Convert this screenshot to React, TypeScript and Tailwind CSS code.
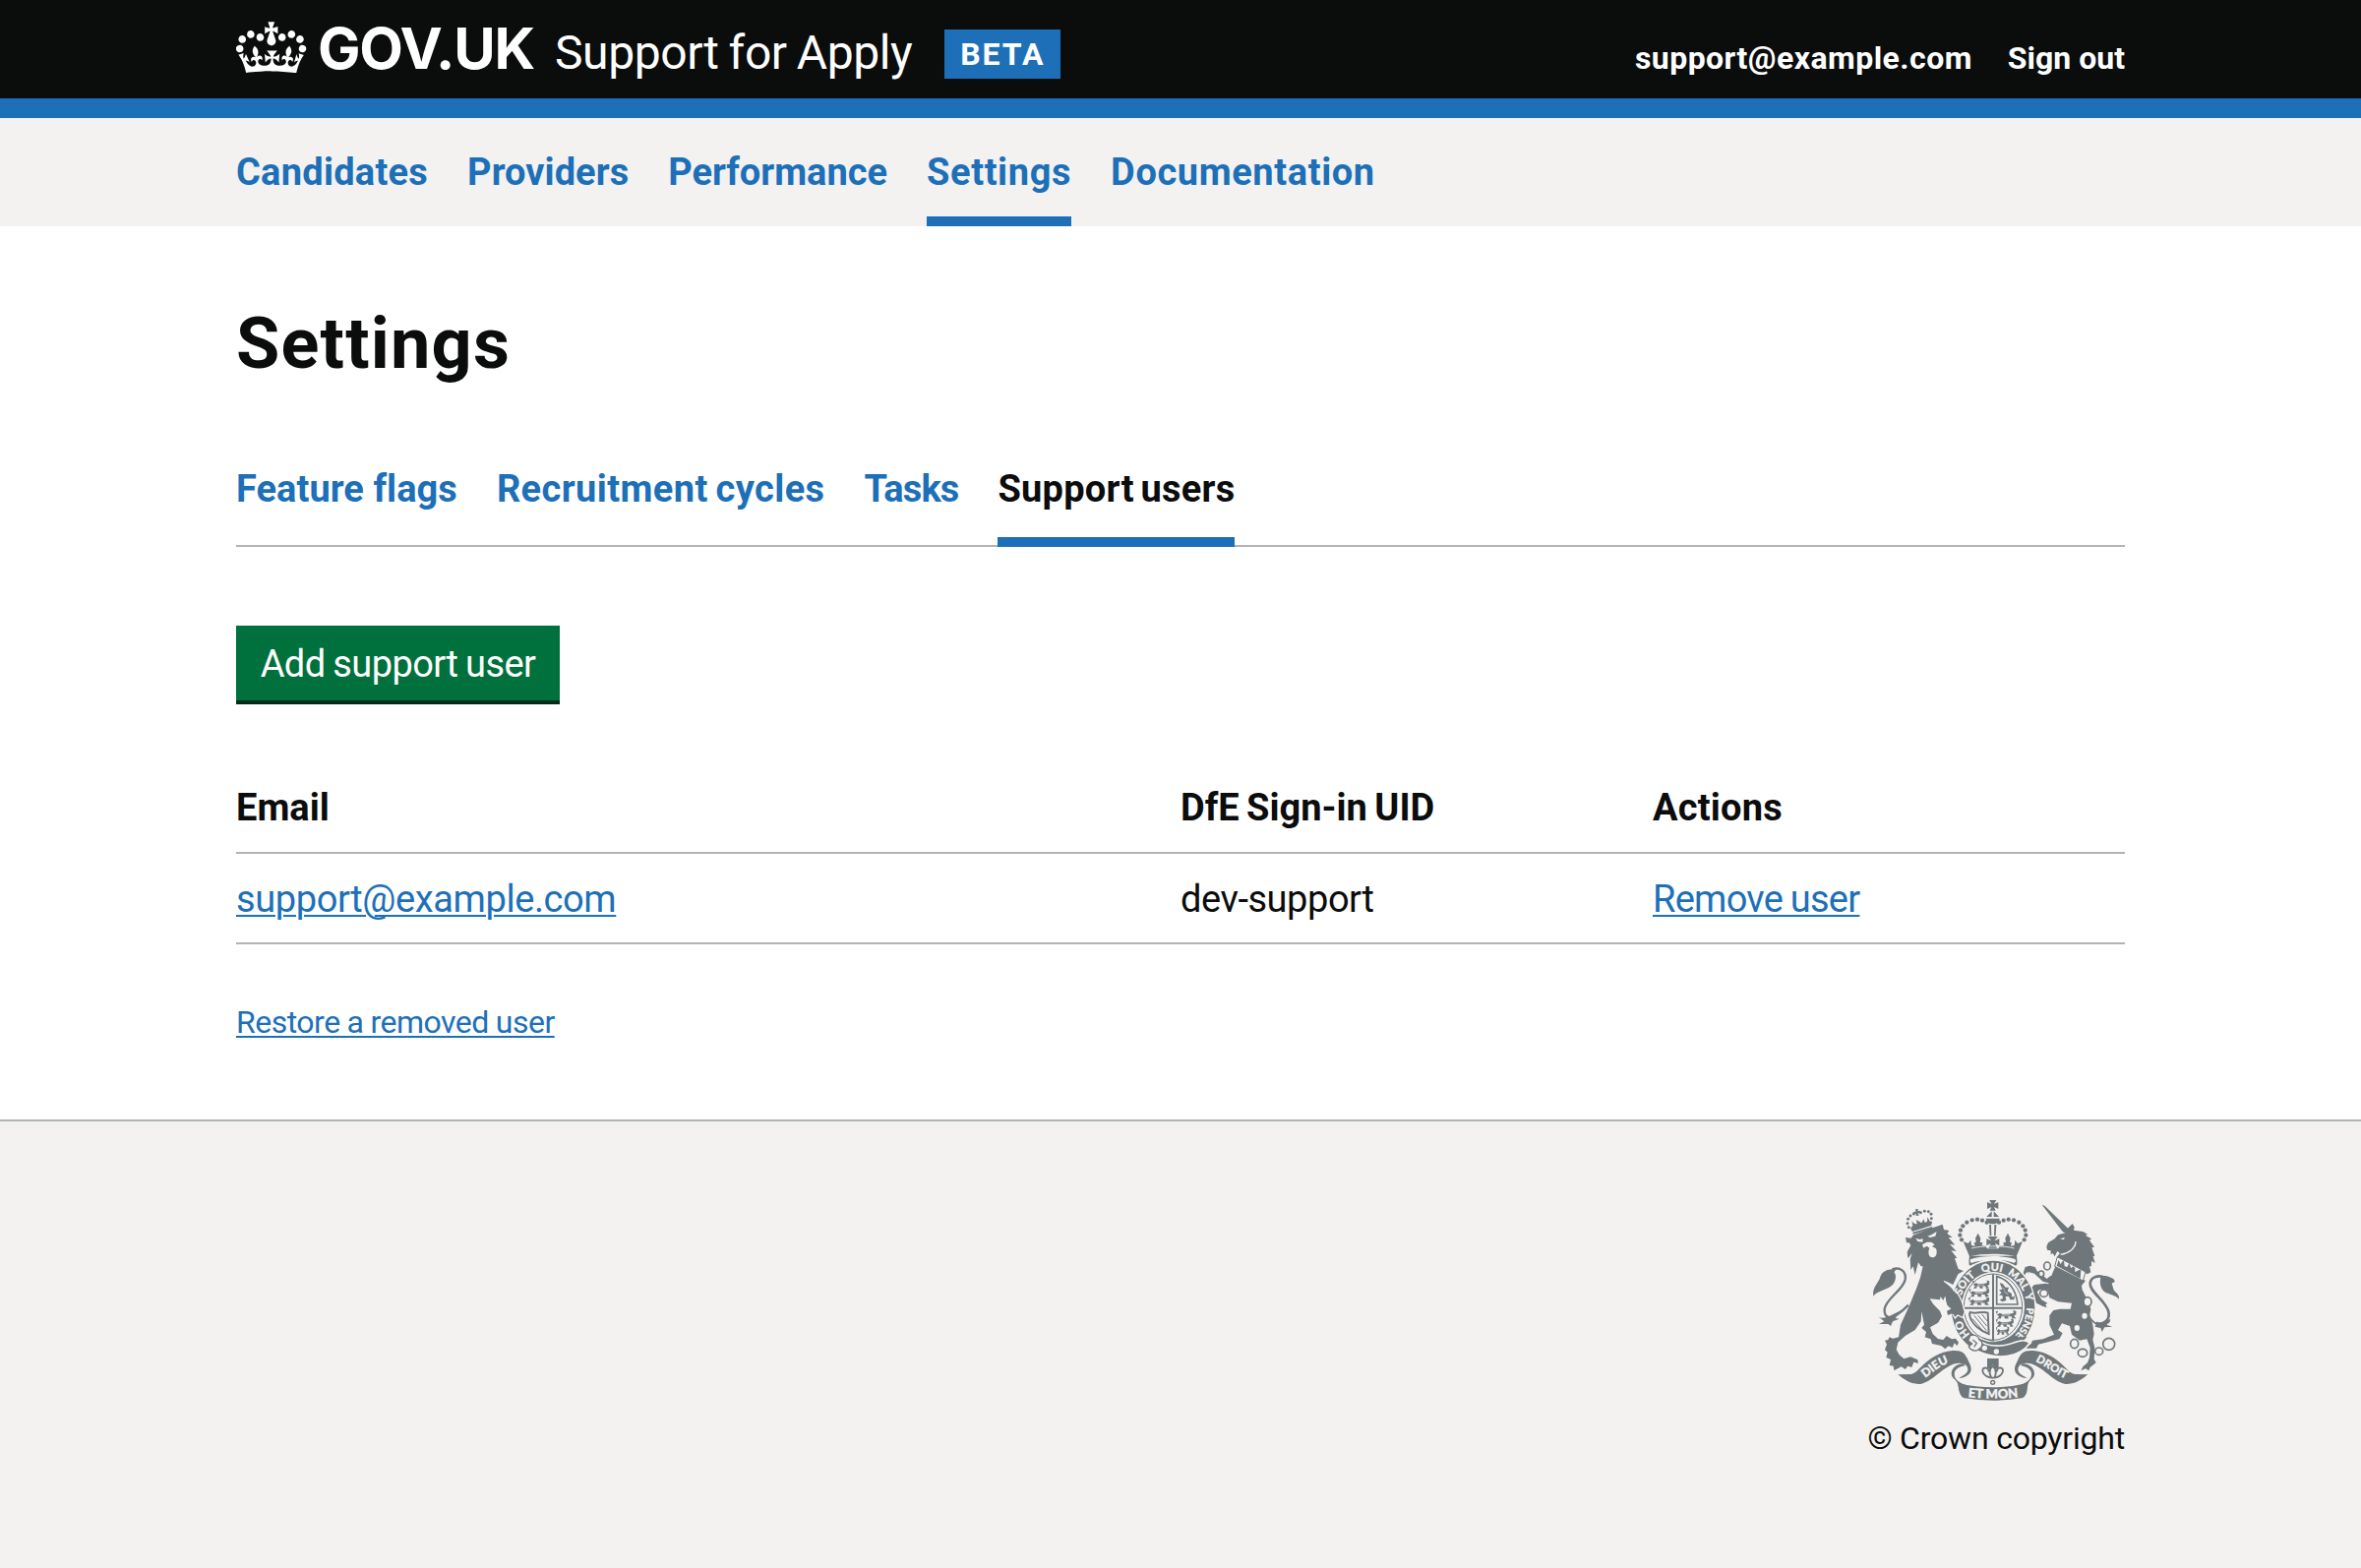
const GREY = "#6f777b";
const PAPER = "#f3f2f1";

function Crown() {
  return (
    <svg viewBox="0 0 36 30" className="block h-[60px] w-[72px] shrink-0" fill="currentColor" aria-hidden="true">
      <path d="M6.7 12.2c1 .4 2.1-.1 2.5-1s-.1-2.1-1-2.5c-1-.4-2.1.1-2.5 1-.4 1 0 2.1 1 2.5m-4.3 2.5c1 .4 2.1-.1 2.5-1s-.1-2.1-1-2.5c-1-.4-2.1.1-2.5 1-.5 1 0 2.1 1 2.5m-1.3 4.8c1 .4 2.1-.1 2.5-1s-.1-2.1-1-2.5c-1-.4-2.1.1-2.5 1-.4 1 0 2.1 1 2.5m10.4-5.8c1 .4 2.1-.1 2.5-1s-.1-2.1-1-2.5c-1-.4-2.1.1-2.5 1s0 2.1 1 2.5m17.4-1.5c-1 .4-2.1-.1-2.5-1s.1-2.1 1-2.5c1-.4 2.1.1 2.5 1 .5 1 0 2.1-1 2.5m4.3 2.5c-1 .4-2.1-.1-2.5-1s.1-2.1 1-2.5c1-.4 2.1.1 2.5 1 .5 1 0 2.1-1 2.5m1.3 4.8c-1 .4-2.1-.1-2.5-1s.1-2.1 1-2.5c1-.4 2.1.1 2.5 1 .4 1 0 2.1-1 2.5m-10.4-5.8c-1 .4-2.1-.1-2.5-1s.1-2.1 1-2.5c1-.4 2.1.1 2.5 1s0 2.1-1 2.5m-5.3-4.9 2.4 1.3V6.5l-2.4.8c-.1-.1-.1-.2-.2-.2s1-3 1-3h-3.4l1 3c-.1.1-.2.1-.2.2-.1.1-2.4-.7-2.4-.7v3.5L17 8.8c.1.1.1.2.2.3l-1.4 4.2c-.1.2-.1.4-.1.6 0 1.1.8 2 1.9 2.2h.7c1-.2 1.9-1.1 1.9-2.1 0-.2 0-.4-.1-.6l-1.4-4.2c-.1-.1 0-.2.1-.3m-1 20.3c4.6 0 8.9.3 12.8.9 1.1-4.6 2.4-7.2 3.8-9.1l-2.6-.9c.3 1.3.3 1.9 0 2.8-.4-.4-.8-1.1-1.1-2.4l-1.2 4.2c.8-.5 1.4-.9 2-.9-1.2 2.6-2.7 3.2-3.6 3-1.2-.2-1.7-1.3-1.5-2.2.3-1.3 1.6-1.6 2.2-.1 1.2-2.4-.8-3.1-2.1-2.4 1.9-1.9 2.2-3.6.6-5.7-2.2 1.7-2.2 3.3-1.2 5.6-1.3-1.5-3.3-.7-2.5 1.7.9-1.4 2.1-.5 2 .8-.2 1.2-1.7 2.1-3.7 1.9-2.7-.2-2.9-2.1-2.9-3.6.7-.1 1.9.5 2.9 1.9l.4-4.3c-1.1 1.1-2.1 1.4-3.2 1.4.4-1.2 2.1-3 2.1-3h-5.4s1.7 1.9 2.1 3c-1.1 0-2.1-.2-3.2-1.4l.4 4.3c1-1.4 2.2-2 2.9-1.9-.1 1.5-.2 3.4-2.9 3.6-1.9.2-3.5-.7-3.7-1.9-.2-1.3 1.1-2.2 2-.8.7-2.4-1.3-3.1-2.6-1.7 1-2.3 1-4-1.2-5.6-1.6 2.1-1.3 3.8.6 5.7-1.3-.7-3.2 0-2.1 2.4.6-1.5 1.9-1.1 2.2.1.2.9-.4 1.9-1.5 2.2-1 .2-2.5-.4-3.7-3 .7 0 1.3.4 2 .9L5 20.4c-.3 1.2-.7 1.9-1.2 2.4-.3-.8-.2-1.5 0-2.8l-2.6.9C2.7 22.8 4 25.4 5.1 30c3.8-.5 8.2-.9 12.7-.9" />
    </svg>
  );
}

const arch: [number, number][] = [
  [389, 128], [375, 122], [360, 119], [344, 121], [328, 128], [316, 139], [309, 152], [307, 167], [312, 181],
];
const lionBeads: [number, number][] = [
  [151, 143], [147, 131], [149, 118], [156, 108], [166, 102], [187, 98], [199, 94], [211, 95], [219, 103], [220, 116], [218, 129],
];
const rings: [number, number, number, number][] = [
  [573, 261, 10, 12], [555, 285, 8, 9], [563, 344, 12, 11], [696, 370, 12, 14],
  [656, 498, 12, 14], [681, 526, 14, 12], [731, 521, 12, 11], [761, 499, 18, 18],
];

/* A small walking lion, as repeated in the quarters of the shield. */
function Passant({ x, y, w }: { x: number; y: number; w: number }) {
  return (
    <g transform={`translate(${x} ${y}) scale(${w / 36} 1.15)`}>
      <path d="M1 7 L6 2 L11 5 L26 4 L31 1 L29 -5 L35 -3 L35 6 L31 10 L35 16 L28 17 L27 11 L20 11 L22 17 L15 17 L14 11 L9 11 L8 17 L1 17 L5 11 Z M1 6 L-1 -2 L3 -4" fill={GREY} />
      <path d="M10 8 L24 7" stroke={PAPER} strokeWidth="1.3" />
    </g>
  );
}

/* One half of the motto scroll: the tail ribbon and the curl that leads to the centre band. */
function ScrollHalf() {
  return (
    <>
      <path d="M118 592 L158 591 C184 588 204 528 284 519 C314 517 322 528 330 544 C334 556 341 562 341 577 C340 592 324 602 304 603 C310 598 330 592 331 577 C331 566 322 558 310 558 C268 552 226 614 190 620 C160 625 134 606 118 592 Z" fill={GREY} />
      <path d="M318 558 C296 560 281 572 281 589 C281 606 296 605 301 622 C306 642 306 658 322 664 L324 624 C304 616 290 606 290 590 C290 576 306 568 322 565 Z" fill={GREY} />
    </>
  );
}

function RoyalArms() {
  return (
    <svg viewBox="30 60 780 630" className="block h-[210px] w-[260px] overflow-visible" aria-hidden="true">
      <defs>
        <path id="garter" d="M408 500 A102 112 0 0 1 408 276 A102 112 0 0 1 408 500" />
        <path id="scroll-left" d="M184 612 C217 597 240 560 292 552" />
        <path id="scroll-centre" d="M318 659 Q408 671 498 659" />
        <path id="scroll-right" d="M517 545 C560 555 602 599 648 612" />
      </defs>

      {/* central crown */}
      <g fill={GREY}>
        <path d="M397 60 H418 L411 72 L424 66 V87 L411 81 L416 92 H398 L403 81 L390 87 V66 L403 72 Z" />
        <path d="M404 94 L388 111 H404 Z M410 94 L426 111 H410 Z" />
        <path d="M386 116 H428 C427 127 418 133 407 133 C396 133 387 127 386 116 Z" />
        <path d="M396 135 H402 L403 169 H398 Z M412 135 H418 L416 169 H411 Z" />
        {arch.map(([x, y]) => (
          <g key={x}>
            <circle cx={x} cy={y} r="6.4" />
            <circle cx={815 - x} cy={y} r="6.4" />
          </g>
        ))}
        <path d="M392 171 H422 L412 184 L427 178 V199 L414 192 L420 206 H394 L401 192 L388 199 V178 L403 184 Z" />
        <path d="M317 186 L332 192 L340 182 L342 198 L353 200 L350 190 L356 188 L354 176 L362 161 L370 176 L368 188 L376 190 L374 199 L386 200 L390 208 H424 L428 200 L441 199 L439 190 L447 188 L445 176 L453 161 L461 176 L459 188 L465 190 L462 200 L473 198 L475 182 L483 192 L498 186 L479 232 C440 222 375 222 336 232 Z" />
        <path d="M336 230 C332 262 336 262 342 258 C375 243 440 243 473 258 C479 262 484 262 480 230 Z" />
      </g>
      <path d="M340 240 C375 228 440 228 475 240 C480 246 476 252 470 251 C440 240 375 240 345 251 C338 251 336 246 340 240 Z" fill={PAPER} />
      <path d="M342 207 C375 198 440 198 473 207" fill="none" stroke={PAPER} strokeWidth="2.5" />

      {/* lion */}
      <g fill={GREY}>
        {lionBeads.map(([x, y]) => (
          <circle key={`${x}-${y}`} cx={x} cy={y} r="4.4" />
        ))}
        <path d="M171 88 L180 87 L178 94 L184 92 L186 100 L179 99 L182 107 L173 108 L173 101 L167 104 L166 95 L172 96 Z" />
        <path d="M156 146 L163 137 L160 124 L168 132 L176 133 L174 120 L184 126 L190 130 L196 118 L200 128 L207 126 L208 112 L214 122 L221 137 L162 156 Z" />
        <path d="M162 159 L222 141 L224 146 L165 164 Z" />
        <path d="M141 174 L158 176 L164 167 L214 148 L254 134 L258 150 L274 153 L268 162 L284 174 L272 174 L292 197 L276 194 L296 216 L280 214 L298 236 L291 238 L302 270 L318 276 L301 286 L286 318 L262 306 L300 350 L311 368 L318 402 L314 414 L300 408 L292 414 L286 405 L270 410 L268 398 L280 392 L268 380 L262 352 L256 366 L248 354 L246 364 L215 361 L226 378 L246 398 L252 414 L240 434 L216 448 L224 468 L240 483 L256 486 L266 474 L282 484 L294 482 L303 494 L298 504 L290 496 L284 510 L272 505 L262 514 L250 504 L222 498 L218 484 L200 478 L204 462 L190 450 L198 440 L190 400 L188 430 L170 456 L140 474 L118 494 L113 516 L122 532 L136 544 L156 538 L178 547 L180 558 L166 554 L160 570 L148 566 L140 576 L128 568 L106 580 L104 566 L92 564 L96 546 L82 540 L86 524 L78 516 L84 500 L78 488 L88 486 L92 478 L102 482 L120 478 L126 440 L150 388 L174 330 L186 296 L194 262 L188 262 L180 250 L170 288 L164 262 L157 273 L155 240 L161 222 L148 238 L146 218 L157 198 L152 190 L144 190 Z" />
        <path d="M112 272 C92 268 70 276 64 294 C60 312 38 326 43 353 C54 336 86 336 104 316 C114 300 112 286 106 280 Z" />
        <path d="M56 414 C66 424 84 418 96 412 L128 396 L110 420 L122 422 L102 430 L96 444 L88 438 L60 438 L76 430 Z" />
      </g>
      <path d="M100 272 C122 262 144 276 140 302 C134 334 82 360 77 392 C75 408 82 418 94 418 C112 416 132 398 150 380" fill="none" stroke={GREY} strokeWidth="7" />
      <g fill={PAPER}>
        <path d="M172 176 L184 180 L194 178 L193 188 L178 186 Z M208 170 L220 166 L236 156 L232 170 L216 174 Z" />
        <path d="M192 196 L206 188 L220 188 L230 196 L222 201 L234 208 C240 224 232 236 222 235 C212 234 208 222 214 206 L206 200 L196 206 Z" />
      </g>

      {/* unicorn */}
      <g fill={GREY}>
        <path d="M557 74 L566 78 L638 148 L630 162 L620 156 Z" />
        <path d="M571 202 L576 190 L596 178 L606 166 L630 160 L634 148 L650 132 L656 142 L654 152 L682 156 L696 164 L690 168 L708 178 L702 183 L717 203 L709 205 L718 230 L713 232 L719 252 L708 246 L708 262 L702 262 L706 280 L696 286 L648 262 L602 234 L612 222 L604 216 L596 232 L590 222 L584 226 L584 214 L573 212 Z" />
        <path d="M598 262 L622 272 L690 306 L678 320 L680 334 L700 372 L706 392 L703 410 L712 440 L716 468 L712 486 L718 510 L716 545 L722 556 L704 570 L700 580 L690 574 L676 580 L682 568 L696 556 L702 540 L704 510 L694 484 L672 488 L648 470 L642 444 L618 436 L606 456 L620 466 L610 484 L546 500 L540 512 L504 512 L524 498 L528 488 L560 484 L594 470 L580 440 L580 412 L592 396 L612 392 L644 392 L648 374 L606 370 L580 358 L574 334 L578 310 Z" />
        <path d="M506 264 L520 260 L536 264 L542 276 L572 300 L582 292 L596 290 L590 316 L560 308 L534 284 L512 278 L520 286 L510 280 L504 290 L500 282 Z" />
        <path d="M512 340 L534 318 L570 314 L584 318 L580 336 L552 332 L542 340 L556 364 L574 374 L568 378 L572 388 L560 384 L540 374 L532 350 L516 346 L522 352 L508 350 Z" />
        <path d="M736 296 C744 286 762 292 775 300 L780 308 L770 314 L776 334 C780 342 794 346 792 362 C778 348 760 348 748 340 C736 330 732 312 736 296 Z" />
        <path d="M696 396 C706 430 726 440 742 434 L766 422 L764 432 L754 440 L772 446 L748 448 L740 462 L736 450 L718 446 L722 440 L708 430 Z" />
      </g>
      <path d="M752 298 C730 286 706 294 704 314 C702 340 752 366 760 400 C766 424 744 444 722 434" fill="none" stroke={GREY} strokeWidth="8" />
      <path d="M660 186 C660 206 640 222 614 226" fill="none" stroke={PAPER} strokeWidth="4" />
      <path d="M612 178 L626 174 L624 181 Z" fill={PAPER} />
      <path d="M604 233 L690 279 L682 306 L596 262 Z" fill={PAPER} stroke={GREY} strokeWidth="3" />
      <path d="M602 260 L608 242 L614 256 L618 248 L624 244 L626 262 L634 264 L640 252 L646 268 L652 262 L658 266 L658 280 L668 274 L676 272 L674 300 Z" fill={GREY} />
      {rings.map(([x, y, rx, ry]) => (
        <ellipse key={x} cx={x} cy={y} rx={rx} ry={ry} fill={PAPER} stroke={GREY} strokeWidth="5" />
      ))}
      <ellipse cx="687" cy="413" rx="8" ry="9" fill={PAPER} />
      <ellipse cx="664" cy="450" rx="8" ry="9" fill={PAPER} />

      {/* garter and shield */}
      <ellipse cx="408" cy="388" rx="131" ry="148" fill={PAPER} />
      <ellipse cx="408" cy="388" rx="127" ry="143" fill={GREY} />
      <ellipse cx="408" cy="386" rx="96" ry="107" fill={PAPER} />
      <ellipse cx="408" cy="386" rx="89" ry="101" fill="none" stroke={GREY} strokeWidth="3" />
      <g fontFamily="Lato, sans-serif" fontWeight="900" fontSize="33" fill={PAPER} stroke={PAPER} strokeWidth="0.8" textAnchor="middle">
        <text><textPath href="#garter" startOffset="15.5%">HO</textPath></text>
        <text><textPath href="#garter" startOffset="36%">SOIT</textPath></text>
        <text><textPath href="#garter" startOffset="49.5%">QUI</textPath></text>
        <text><textPath href="#garter" startOffset="62%">MAL</textPath></text>
        <text><textPath href="#garter" startOffset="70.5%">Y</textPath></text>
        <text fontSize="30"><textPath href="#garter" startOffset="82%">PENSE</textPath></text>
      </g>
      <path d="M408 286 V488 M319 389 H497" stroke={GREY} strokeWidth="6" />
      <Passant x={346} y={310} w={52} />
      <Passant x={336} y={335} w={62} />
      <Passant x={334} y={361} w={64} />
      <Passant x={418} y={402} w={62} />
      <Passant x={418} y={427} w={54} />
      <Passant x={418} y={451} w={40} />
      <path d="M419 293 C450 300 478 328 483 378 H419 Z" fill="none" stroke={GREY} strokeWidth="5" />
      <path d="M428 312 L438 316 L446 326 L456 326 L452 338 L464 344 L466 356 L474 352 L472 364 L460 364 L456 354 L446 354 L448 366 L436 370 L428 364 L438 360 L436 350 L426 350 L434 342 L426 334 L436 332 Z" fill={GREY} />
      <path d="M441 338 L454 348 M436 326 L444 334" stroke={PAPER} strokeWidth="2" />
      <path d="M338 402 C358 410 374 396 392 404 L395 468 C376 462 340 440 336 408 Z" fill="none" stroke={GREY} strokeWidth="6" />
      <path d="M350 412 L388 458 M362 412 L389 444 M374 408 L389 428 M345 422 L376 458" stroke={GREY} strokeWidth="3" />
      {/* strap end and buckle */}
      <path d="M372 477 C396 496 430 494 452 482 L512 476 L478 512 Z" fill={GREY} />
      <path d="M352 482 C390 508 430 508 462 498 C486 490 500 482 520 496 C490 540 420 552 352 516 Z" fill={GREY} stroke={PAPER} strokeWidth="5" />
      <circle cx="382" cy="511" r="8" fill={PAPER} />
      <circle cx="418" cy="522" r="8" fill={PAPER} />
      <path d="M338 474 C350 468 364 474 366 486 C378 492 378 506 366 514 C356 524 338 518 334 506 L344 498 L332 488 Z" fill={PAPER} stroke={GREY} strokeWidth="4" />
      <path d="M346 486 L358 496 L350 508" fill="none" stroke={GREY} strokeWidth="4" />
      {/* lion's paw over the garter */}
      <path d="M256 306 L300 350 L312 368 L320 404 L314 416 L300 408 L292 416 L286 405 L270 410 L268 398 L280 392 L266 372 Z" fill={GREY} />
      <path d="M258 307 C290 330 312 346 322 402 L316 419 L300 411 L292 420 L285 408" fill="none" stroke={PAPER} strokeWidth="4" />

      {/* pendant */}
      <g fill={GREY}>
        <path d="M390 543 H425 V572 L416 576 L407 562 L398 576 L390 572 Z" />
        <circle cx="407" cy="616" r="8" />
      </g>
      <path d="M407 566 C420 578 418 590 412 602 H403 C396 590 394 578 407 566 Z M400 602 C382 598 372 584 378 574 C386 568 396 574 394 584 M415 602 C432 598 442 584 436 574 C428 568 418 574 420 584" fill={PAPER} stroke={GREY} strokeWidth="5.5" />
      <circle cx="407" cy="616" r="3.5" fill={PAPER} />

      {/* scroll */}
      <ScrollHalf />
      <g transform="translate(815 0) scale(-1 1)">
        <ScrollHalf />
      </g>
      <path d="M301 618 Q408 644 514 618 C512 640 512 658 496 664 Q408 678 320 664 C306 658 303 640 301 618 Z" fill={GREY} />
      <g fontFamily="Lato, sans-serif" fontWeight="900" fill={PAPER} stroke={PAPER} strokeWidth="1" textAnchor="middle">
        <text fontSize="36"><textPath href="#scroll-left" startOffset="50%">DIEU</textPath></text>
        <text fontSize="39"><textPath href="#scroll-centre" startOffset="50%">ET MON</textPath></text>
        <text fontSize="34"><textPath href="#scroll-right" startOffset="50%">DROIT</textPath></text>
      </g>
    </svg>
  );
}

const navItems = [
  { label: "Candidates", tracking: "tracking-[0.25px]" },
  { label: "Providers", tracking: "tracking-[0.05px]" },
  { label: "Performance", tracking: "tracking-normal" },
  { label: "Settings", tracking: "tracking-[0.6px]", current: true },
  { label: "Documentation", tracking: "tracking-[0.6px]" },
];

const tabs = [
  { label: "Feature flags", tracking: "tracking-[0.05px]" },
  { label: "Recruitment cycles", tracking: "tracking-[0.4px] [word-spacing:-2px]" },
  { label: "Tasks", tracking: "tracking-[-0.9px]" },
  { label: "Support users", tracking: "tracking-[0.25px] [word-spacing:-3px]", current: true },
];

const link = "text-[#1d70b8] underline decoration-2 underline-offset-[3px]";

export default function App() {
  return (
    <div className="flex min-h-[1594px] w-[2400px] flex-col bg-white font-[Roboto,sans-serif] whitespace-nowrap text-[#0b0c0c]">
      <header className="h-[120px] border-b-[20px] border-[#1d70b8] bg-[#0b0c0c] text-white">
        <div className="mx-auto flex h-[100px] w-[1920px] items-start">
          <div className="flex items-start">
            <div className="pt-3.5"><Crown /></div>
            <span className="mt-[19px] ml-[11px] w-[222px] font-[Inter,sans-serif] text-[58px] leading-[60px] font-bold tracking-[-1.2px]">GOV.UK</span>
            <span className="mt-6 ml-[19px] text-[48px] leading-[60px] tracking-[-0.4px] [word-spacing:-1.5px]">Support for Apply</span>
            <strong className="mt-[30px] ml-[33px] block h-[50px] w-[118px] bg-[#1d70b8] text-center text-[32px] leading-[50px] font-bold tracking-[2px]">BETA</strong>
          </div>
          <div className="mt-[34px] ml-auto flex gap-[36px] text-[32px] leading-[50px] font-bold">
            <a className="tracking-[0.45px]">support@example.com</a>
            <a>Sign out</a>
          </div>
        </div>
      </header>

      <nav className="h-[110px] bg-[#f3f2f1]">
        <div className="mx-auto flex w-[1920px] gap-10 text-[38px] leading-[110px] font-bold text-[#1d70b8]">
          {navItems.map((n) => (
            <a key={n.label} className={`h-[110px] ${n.tracking} ${n.current ? "shadow-[inset_0_-10px_0_#1d70b8]" : ""}`}>{n.label}</a>
          ))}
        </div>
      </nav>

      <main className="mx-auto flex h-[908px] w-[1920px] flex-col items-start">
        <h1 className="mt-20 text-[72px] leading-[80px] font-bold tracking-[1.2px]">Settings</h1>

        <div className="mt-[82px] flex h-[84px] w-full gap-10 text-[38px] leading-[50px] font-bold text-[#1d70b8] shadow-[inset_0_-2px_0_#b1b4b6]">
          {tabs.map((t) => (
            <a key={t.label} className={`h-[84px] ${t.tracking} ${t.current ? "text-[#0b0c0c] shadow-[inset_0_-10px_0_#1d70b8]" : ""}`}>{t.label}</a>
          ))}
        </div>

        <button className="mt-20 h-20 w-[329px] border-b-4 border-[#002d18] bg-[#00703c] pt-0.5 text-center text-[38px] leading-[74px] tracking-[-0.6px] text-white [word-spacing:-1px]">Add support user</button>

        <div className="mt-20 grid w-full grid-cols-[960px_480px_480px] text-[38px] leading-[50px]">
          <div className="col-span-3 grid h-[72px] grid-cols-subgrid border-b-2 border-[#b1b4b6] font-bold [word-spacing:-2px]">
            <span>Email</span>
            <span>DfE Sign-in UID</span>
            <span className="tracking-[0.2px]">Actions</span>
          </div>
          <div className="col-span-3 grid h-[92px] grid-cols-subgrid border-b-2 border-[#b1b4b6] pt-[21px]">
            <span><a className={`${link} tracking-[-0.4px]`}>support@example.com</a></span>
            <span className="tracking-[-0.45px]">dev-support</span>
            <span><a className={`${link} tracking-[-0.75px] [word-spacing:-1px]`}>Remove user</a></span>
          </div>
        </div>

        <a className={`${link} mt-[59px] text-[32px] leading-[40px] tracking-[-0.5px] [word-spacing:-0.5px]`}>Restore a removed user</a>
      </main>

      <footer className="flex-1 border-t-2 border-[#b1b4b6] bg-[#f3f2f1]">
        <div className="mx-auto flex w-[1920px] flex-col items-end pt-20">
          <RoyalArms />
          <span className="mt-3 text-[32px] leading-[40px] tracking-[-0.2px]">© Crown copyright</span>
        </div>
      </footer>
    </div>
  );
}
